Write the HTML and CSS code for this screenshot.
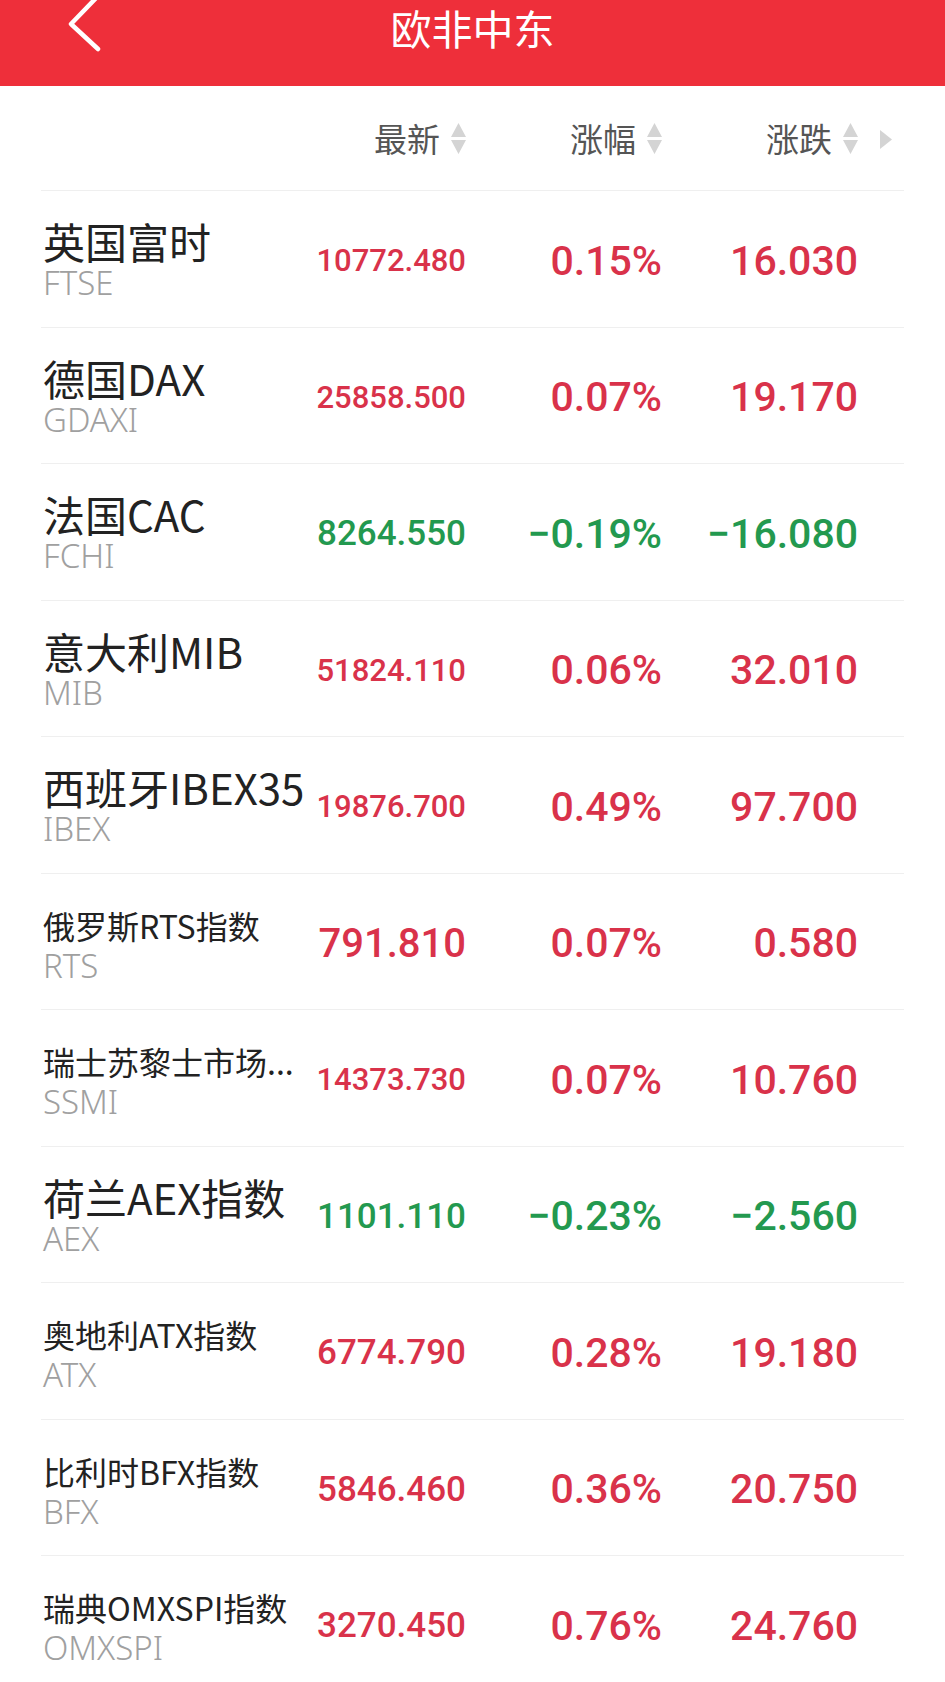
FILE: index.html
```html
<!DOCTYPE html>
<html lang="zh-CN">
<head>
  <meta charset="UTF-8" />
  <meta name="viewport" content="width=device-width, initial-scale=1.0" />
  <title>欧非中东</title>
  <link rel="stylesheet" href="styles.css">
</head>
<body>
  <div class="topbar">
    <div class="back">
      <svg width="40" height="52" viewBox="0 0 40 52">
        <path d="M34 -4 L7 24 L34 49" fill="none" stroke="#fff" stroke-width="4.5" stroke-linecap="round" stroke-linejoin="round" />
      </svg>
    </div>
    <div class="title">欧非中东</div>
    <div></div>
  </div>

  <div class="list">
    <!-- column heads -->
    <div class="head">
      <div></div>
      <div class="sort">最新
        <svg width="15" height="31" viewBox="0 0 15 31"><path d="M7.5 0 L15 14 L0 14 Z M0 17 L15 17 L7.5 31 Z" fill="#d4d4d4" /></svg>
      </div>
      <div class="sort">涨幅
        <svg width="15" height="31" viewBox="0 0 15 31"><path d="M7.5 0 L15 14 L0 14 Z M0 17 L15 17 L7.5 31 Z" fill="#d4d4d4" /></svg>
      </div>
      <div class="sort">涨跌
        <svg width="15" height="31" viewBox="0 0 15 31"><path d="M7.5 0 L15 14 L0 14 Z M0 17 L15 17 L7.5 31 Z" fill="#d4d4d4" /></svg>
      </div>
      <div class="more">
        <svg width="12" height="19" viewBox="0 0 12 19"><path d="M0 0 L12 9.5 L0 19 Z" fill="#d4d4d4" /></svg>
      </div>
    </div>

    <div class="row up">
      <div class="name"><div class="cn">英国富时</div><div class="code">FTSE</div></div>
      <div class="num n9">10772.480</div>
      <div class="num">0.15%</div>
      <div class="num">16.030</div>
    </div>
    <div class="row up">
      <div class="name"><div class="cn">德国DAX</div><div class="code">GDAXI</div></div>
      <div class="num n9">25858.500</div>
      <div class="num">0.07%</div>
      <div class="num">19.170</div>
    </div>
    <div class="row down">
      <div class="name"><div class="cn">法国CAC</div><div class="code">FCHI</div></div>
      <div class="num n8">8264.550</div>
      <div class="num">−0.19%</div>
      <div class="num">−16.080</div>
    </div>
    <div class="row up">
      <div class="name"><div class="cn">意大利MIB</div><div class="code">MIB</div></div>
      <div class="num n9">51824.110</div>
      <div class="num">0.06%</div>
      <div class="num">32.010</div>
    </div>
    <div class="row up">
      <div class="name"><div class="cn">西班牙IBEX35</div><div class="code">IBEX</div></div>
      <div class="num n9">19876.700</div>
      <div class="num">0.49%</div>
      <div class="num">97.700</div>
    </div>
    <div class="row up">
      <div class="name small"><div class="cn">俄罗斯RTS指数</div><div class="code">RTS</div></div>
      <div class="num n7">791.810</div>
      <div class="num">0.07%</div>
      <div class="num">0.580</div>
    </div>
    <div class="row up">
      <div class="name small"><div class="cn">瑞士苏黎士市场...</div><div class="code">SSMI</div></div>
      <div class="num n9">14373.730</div>
      <div class="num">0.07%</div>
      <div class="num">10.760</div>
    </div>
    <div class="row down">
      <div class="name"><div class="cn">荷兰AEX指数</div><div class="code">AEX</div></div>
      <div class="num n8">1101.110</div>
      <div class="num">−0.23%</div>
      <div class="num">−2.560</div>
    </div>
    <div class="row up">
      <div class="name small"><div class="cn">奥地利ATX指数</div><div class="code">ATX</div></div>
      <div class="num n8">6774.790</div>
      <div class="num">0.28%</div>
      <div class="num">19.180</div>
    </div>
    <div class="row up">
      <div class="name small"><div class="cn">比利时BFX指数</div><div class="code">BFX</div></div>
      <div class="num n8">5846.460</div>
      <div class="num">0.36%</div>
      <div class="num">20.750</div>
    </div>
    <div class="row up">
      <div class="name small"><div class="cn">瑞典OMXSPI指数</div><div class="code">OMXSPI</div></div>
      <div class="num n8">3270.450</div>
      <div class="num">0.76%</div>
      <div class="num">24.760</div>
    </div>
  </div>
</body>
</html>
```

FILE: styles.css
```css
body {
  margin: 0;
  background: #fff;
  font-family: "Noto Sans CJK SC", "Noto Sans", sans-serif;
  color: #222;
  overflow: hidden;
}
.topbar {
  height: 86px;
  background: #ee2f3a;
  display: grid;
  grid-template-columns: 1fr auto 1fr;
  align-items: start;
}
.back {
  padding-left: 64px;
  height: 52px;
}
.back svg {
  display: block;
}
.title {
  color: #fff;
  font-size: 41px;
  line-height: 54px;
}
.list {
  margin: 0 41px;
}
.head, .row {
  display: grid;
  grid-template-columns: 273px 150px 196px 196px 1fr;
  padding-left: 2px;
  align-items: center;
}
.head {
  height: 104px;
}
.sort {
  display: flex;
  justify-content: flex-end;
  align-items: center;
  gap: 11px;
  font-size: 33px;
  color: #555;
}
.sort svg, .more svg {
  display: block;
}
.more {
  padding-left: 22px;
  padding-top: 2px;
}
.row {
  height: 136.5px;
  box-sizing: border-box;
  border-top: 1px solid #efefef;
}
.name {
  align-self: start;
  padding-top: 28px;
  white-space: nowrap;
}
.cn {
  font-size: 42px;
  line-height: 44px;
  color: #222;
}
.small .cn {
  font-size: 32px;
  line-height: 41px;
  padding-top: 3px;
}
.code {
  font-family: "Noto Sans", sans-serif;
  font-weight: 300;
  font-size: 33px;
  line-height: 40px;
  margin-top: 0;
  color: #a0a0a0;
}
.num {
  text-align: right;
  font-family: Roboto, "Liberation Sans", sans-serif;
  font-weight: 500;
  font-size: 41px;
  padding-top: 4px;
  white-space: nowrap;
}
.num.n9 { font-size: 31px; }
.num.n8 { font-size: 35px; }
.num.n7 { font-size: 40px; }
.up .num {
  color: #d9324a;
}
.down .num {
  color: #23994f;
}
```
